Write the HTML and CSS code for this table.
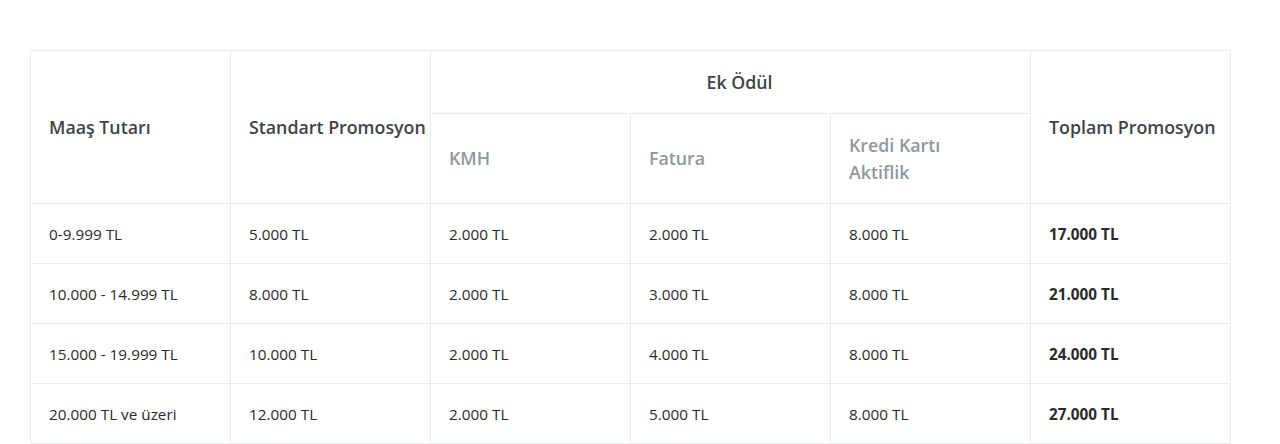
FILE: index.html
```html
<!DOCTYPE html>
<html lang="tr">
<head>
<meta charset="utf-8">
<link rel="stylesheet" href="styles.css">
</head>
<body>
<div class="wrap">
<table class="promo">
  <colgroup>
    <col class="c"><col class="c"><col class="c"><col class="c"><col class="c"><col class="c">
  </colgroup>
  <thead>
    <tr class="h1">
      <th rowspan="2">Maaş Tutarı</th>
      <th rowspan="2">Standart Promosyon</th>
      <th colspan="3" class="center">Ek Ödül</th>
      <th rowspan="2">Toplam Promosyon</th>
    </tr>
    <tr class="h2">
      <th class="sub">KMH</th>
      <th class="sub">Fatura</th>
      <th class="sub">Kredi Kartı<br>Aktiflik</th>
    </tr>
  </thead>
  <tbody>
    <tr><td>0-9.999 TL</td><td>5.000 TL</td><td>2.000 TL</td><td>2.000 TL</td><td>8.000 TL</td><td class="b">17.000 TL</td></tr>
    <tr><td>10.000 - 14.999 TL</td><td>8.000 TL</td><td>2.000 TL</td><td>3.000 TL</td><td>8.000 TL</td><td class="b">21.000 TL</td></tr>
    <tr><td>15.000 - 19.999 TL</td><td>10.000 TL</td><td>2.000 TL</td><td>4.000 TL</td><td>8.000 TL</td><td class="b">24.000 TL</td></tr>
    <tr><td>20.000 TL ve üzeri</td><td>12.000 TL</td><td>2.000 TL</td><td>5.000 TL</td><td>8.000 TL</td><td class="b">27.000 TL</td></tr>
  </tbody>
</table>
</div>
</body>
</html>
```
FILE: styles.css
```css
html, body {
  margin: 0;
  padding: 0;
  background: #fff;
}
body {
  font-family: "Open Sans", "Liberation Sans", sans-serif;
  color: #2a2a2a;
}
.wrap {
  padding: 50px 30px 0 30px;
}
.promo {
  border-collapse: collapse;
  table-layout: fixed;
  width: 1201px;
}
.promo .c {
  width: 200px;
}
.promo th,
.promo td {
  border: 1px solid #e8eced;
  text-align: left;
  vertical-align: middle;
  padding: 0 0 0 18px;
  white-space: nowrap;
}
.promo th {
  font-size: 17.8px;
  font-weight: 600;
  color: #3d4548;
  line-height: 27px;
}
.promo th.center {
  text-align: center;
}
.promo th.sub {
  color: #8e999e;
}
.promo .h1 th.center {
  height: 62px;
}
.promo .h2 th {
  height: 89px;
}
.promo td {
  font-size: 15.3px;
  line-height: 20px;
  height: 59px;
  color: #2a2a2a;
}
.promo td.b {
  font-weight: 700;
}
```
